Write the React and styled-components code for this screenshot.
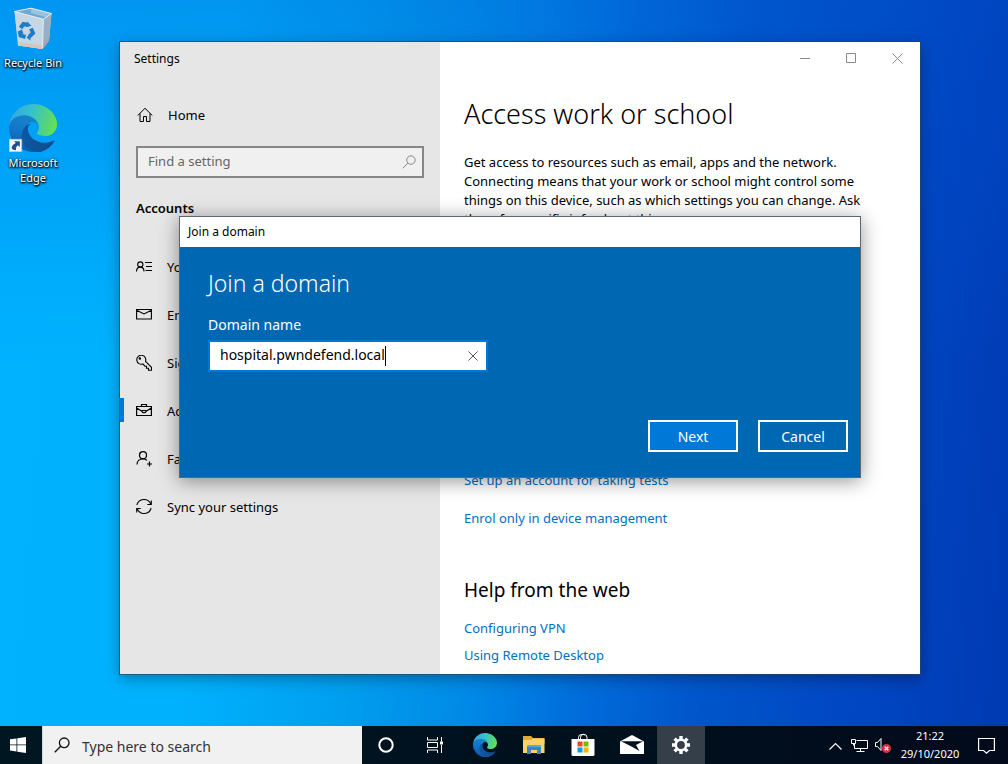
import { useState } from "react";
import styled, { createGlobalStyle } from "styled-components";

const GlobalStyle = createGlobalStyle`
  * {
    box-sizing: border-box;
  }
  body {
    margin: 0;
    font-family: "Noto Sans", "Open Sans", sans-serif;
    font-size: 13px;
    color: #000;
  }
  h1, h2, p, ul {
    margin: 0;
    padding: 0;
    font-weight: 400;
  }
  ul {
    list-style: none;
  }
  button, input {
    font-family: inherit;
    border: none;
    padding: 0;
    background: none;
    color: inherit;
    outline: none;
  }
  svg {
    display: block;
    flex-shrink: 0;
  }
`;

const Screen = styled.div`
  height: 100vh;
  display: flex;
  flex-direction: column;
  overflow: hidden;
`;

const Desktop = styled.main`
  position: relative;
  flex: 1;
  min-height: 0;
  background:
    linear-gradient(180deg, rgba(0, 86, 210, 0.3), rgba(0, 86, 210, 0) 50%),
    linear-gradient(
      95deg,
      #00b2ff 0%,
      #00b2fe 22%,
      #009eee 38%,
      #0088e6 50%,
      #006cda 60%,
      #0055ca 71%,
      #0046c2 86%,
      #003ab2 100%
    );
`;

const Shortcuts = styled.div`
  width: 66px;
  display: flex;
  flex-direction: column;
`;

const Shortcut = styled.button`
  min-height: 100px;
  padding-top: 4px;
  display: flex;
  flex-direction: column;
  align-items: center;
  justify-content: flex-start;
  gap: 3px;
  color: #fff;
  font-size: 11px;
  line-height: 15px;
  text-shadow: 0 1px 2px #000, 1px 1px 2px #000, 0 0 3px rgba(0, 0, 0, 0.6);
`;

const SettingsWindow = styled.section`
  position: absolute;
  top: 42px;
  left: 120px;
  right: 88px;
  bottom: 52px;
  display: flex;
  background: #fff;
  box-shadow: 0 0 0 1px rgba(40, 70, 100, 0.7), 0 4px 14px rgba(0, 0, 0, 0.35);
`;

const Sidebar = styled.nav`
  width: 320px;
  flex-shrink: 0;
  background: #e6e6e6;
`;

const WindowTitle = styled.div`
  height: 34px;
  padding-left: 14px;
  font-size: 12px;
  line-height: 34px;
`;

const HomeButton = styled.button`
  width: 100%;
  height: 40px;
  margin-top: 19px;
  padding-left: 17px;
  display: flex;
  align-items: center;
  gap: 15px;
  font-size: 13px;
`;

const SearchBox = styled.label`
  height: 32px;
  margin: 11px 16px 0;
  padding: 0 6px 0 10px;
  display: flex;
  align-items: center;
  border: 2px solid #868686;
  background: #f0f0f0;
  color: #777;

  input {
    flex: 1;
    min-width: 0;
    height: 28px;
    padding-bottom: 2px;
    font-size: 13px;
    color: #000;
  }
  input::placeholder {
    color: #666;
    opacity: 1;
  }
`;

const SectionTitle = styled.h2`
  margin: 20px 16px 25px;
  font-size: 13px;
  line-height: 20px;
  font-weight: 600;
`;

const NavItem = styled.button`
  position: relative;
  width: 100%;
  height: 48px;
  padding-left: 16px;
  display: flex;
  align-items: center;
  gap: 15px;
  font-size: 13px;
  white-space: nowrap;

  &::before {
    content: "";
    position: absolute;
    left: 0;
    top: 11px;
    width: 4px;
    height: 24px;
    background: ${(props) => (props.$active ? "#0078d7" : "transparent")};
  }
`;

const Content = styled.div`
  flex: 1;
  min-width: 0;
  display: flex;
  flex-direction: column;
`;

const CaptionButtons = styled.div`
  display: flex;
  justify-content: flex-end;
  color: #8a8a8a;
`;

const CaptionButton = styled.button`
  width: 46px;
  height: 32px;
  display: grid;
  place-items: center;
`;

const Article = styled.div`
  flex: 1;
  display: flex;
  flex-direction: column;
  padding: 22px 40px 9px 24px;

  h1 {
    font-size: 27px;
    line-height: 36px;
    font-weight: 300;
  }
  p {
    max-width: 416px;
    margin-top: 21px;
    line-height: 19px;
  }
  h2 {
    margin: 48px 0 14px;
    font-size: 19px;
    line-height: 28px;
  }
`;

const LinkList = styled.div`
  display: flex;
  flex-direction: column;
  align-items: flex-start;
  gap: ${(props) => props.$gap}px;
  margin-top: ${(props) => (props.$push ? "auto" : "0")};

  a {
    color: #006fc4;
    line-height: 20px;
    text-decoration: none;
  }
`;

const Dialog = styled.section`
  position: absolute;
  top: 174px;
  left: 59px;
  right: 59px;
  border: 1px solid #5c6670;
  background: #0067b3;
  color: #fff;
  box-shadow: 0 3px 18px rgba(0, 0, 0, 0.42);
`;

const DialogTitle = styled.div`
  height: 30px;
  padding-left: 8px;
  background: #fff;
  color: #000;
  font-size: 12px;
  line-height: 30px;
`;

const DialogForm = styled.form`
  padding: 20px 12px 25px 28px;

  h1 {
    font-size: 23px;
    line-height: 32px;
    font-weight: 300;
  }
  > label {
    display: block;
    margin: 16px 0 5px;
    font-size: 14px;
    line-height: 20px;
  }
`;

const DomainField = styled.div`
  max-width: 280px;
  height: 32px;
  padding-left: 10px;
  display: flex;
  align-items: center;
  border: 2px solid #0078d7;
  background: #fff;
  color: #000;

  input {
    field-sizing: content;
    min-width: 0;
    height: 28px;
    padding-bottom: 3px;
    font-size: 14px;
    caret-color: transparent;
  }
  button {
    width: 26px;
    height: 28px;
    margin-left: auto;
    display: grid;
    place-items: center;
    color: #444;
  }
`;

const Caret = styled.span`
  width: 1px;
  height: 20px;
  background: #000;
`;

const DialogActions = styled.div`
  margin-top: 48px;
  display: flex;
  justify-content: flex-end;
  gap: 20px;
`;

const DialogButton = styled.button`
  width: 90px;
  height: 32px;
  border: 2px solid #fff;
  background: ${(props) => (props.$primary ? "#0078d7" : "transparent")};
  font-size: 14px;
`;

const Taskbar = styled.footer`
  height: 38px;
  flex-shrink: 0;
  display: flex;
  background: linear-gradient(90deg, #001722, #00101d 60%, #020a1b);
  color: #fff;
`;

const TaskButton = styled.button`
  width: ${(props) => props.$width || 49}px;
  display: grid;
  place-items: center;
  background: ${(props) => (props.$active ? "#343f49" : "transparent")};
`;

const StartButton = styled(TaskButton)`
  padding-right: 6px;
`;

const TaskSearch = styled.label`
  width: 320px;
  padding-left: 11px;
  display: flex;
  align-items: center;
  gap: 12px;
  border-left: 1px solid #d6d9da;
  background: #f1f1f1;
  color: #111;

  input {
    flex: 1;
    min-width: 0;
    height: 38px;
    padding-top: 2px;
    font-size: 14px;
  }
  input::placeholder {
    color: #333;
    opacity: 1;
  }
`;

const PinnedApps = styled.div`
  display: flex;
  padding-right: 1px;
  padding-left: 2px;
`;

const Tray = styled.div`
  margin-left: auto;
  display: flex;
  align-items: center;
`;

const TrayButton = styled.button`
  width: ${(props) => props.$width}px;
  height: 38px;
  display: grid;
  place-items: center;
`;

const Clock = styled.button`
  width: 70px;
  font-size: 11px;
  line-height: 18px;
  text-align: center;
`;

const Line = ({ size = 16, box = 16, width = 1, children }) => (
  <svg
    width={size}
    height={size}
    viewBox={`0 0 ${box} ${box}`}
    fill="none"
    stroke="currentColor"
    strokeWidth={width}
    aria-hidden="true"
  >
    {children}
  </svg>
);

const HomeIcon = () => (
  <Line>
    <path d="M.7 8.500 8 1.300l7.300 7.200M3 6.500v8h3.500v-5h3v5H13v-8" />
  </Line>
);

const SearchIcon = ({ size = 14, width = 1 }) => (
  <Line size={size} width={width}>
    <circle cx="10.200" cy="5.800" r="4.800" />
    <path d="M6.700 9.300.8 15.200" />
  </Line>
);

const YourInfoIcon = () => (
  <Line width={1.1}>
    <circle cx="4.300" cy="5.500" r="2.600" />
    <path d="M.5 12.500c0-2.700 1.500-4.400 3.800-4.400S8 9.800 8 12.500M9 3.500h7M10 7.500h6M9.500 11.500H16" />
  </Line>
);

const MailIcon = () => (
  <Line width={1.1}>
    <path d="M.6 2.500h14.800v9.500H.6zM.6 3.200 8 7l7.400-3.800" />
  </Line>
);

const KeyIcon = () => (
  <Line width={1.1}>
    <path d="M6.900 9A4.500 4.500 0 1 1 9.500 6.400l6 6v2.800h-3v-2h-2v-2H8.900z" />
    <circle cx="3.900" cy="3.600" r=".7" />
  </Line>
);

const BriefcaseIcon = () => (
  <Line width={1.2}>
    <path d="M.6 3.500h14.800v9H.6zM5.500 3.500v-2h5v2M.6 5l5.400 3.200M15.400 5 10 8.200" />
    <path d="M6 7.500h4v.7a1.500 1.500 0 0 1-1.500 1.500h-1A1.500 1.500 0 0 1 6 8.200z" />
  </Line>
);

const FamilyIcon = () => (
  <Line width={1.2}>
    <circle cx="7" cy="4.200" r="3.500" />
    <path d="M1 13.500C1 10 3.500 7.800 7 7.800c1.800 0 3 .5 4 1.500M13.500 10.500v5M11 13h5" />
  </Line>
);

const SyncIcon = () => (
  <Line width={1.1}>
    <path d="M.9 6A7.300 7.300 0 0 1 14.700 5M15.100 9A7.300 7.300 0 0 1 1.300 10M15.300 1.500v4h-4M.7 13.500v-4h4" />
  </Line>
);

const CloseIcon = ({ size = 11 }) => (
  <Line size={size} box={11}>
    <path d="m.5.5 10 10M10.500.5l-10 10" />
  </Line>
);

const EdgeIcon = ({ size, id }) => (
  <svg width={size} height={size} viewBox="0 0 256 256" aria-hidden="true">
    <defs>
      <linearGradient id={`${id}a`} x1="60" y1="170" x2="240" y2="170" gradientUnits="userSpaceOnUse">
        <stop offset="0" stopColor="#0c59a4" />
        <stop offset="1" stopColor="#114a8b" />
      </linearGradient>
      <linearGradient id={`${id}b`} x1="110" y1="70" x2="45" y2="230" gradientUnits="userSpaceOnUse">
        <stop offset="0" stopColor="#1583cc" />
        <stop offset=".5" stopColor="#1277ca" />
        <stop offset="1" stopColor="#0b5cb0" />
      </linearGradient>
      <linearGradient id={`${id}c`} x1="10" y1="60" x2="250" y2="120" gradientUnits="userSpaceOnUse">
        <stop offset="0" stopColor="#35a8e0" />
        <stop offset=".4" stopColor="#36c0cf" />
        <stop offset=".75" stopColor="#50d284" />
        <stop offset="1" stopColor="#66e24f" />
      </linearGradient>
    </defs>
    <path
      fill={`url(#${id}a)`}
      d="M235.680 195.460a93.730 93.730 0 0 1-10.540 4.710 101.870 101.870 0 0 1-35.900 6.460c-47.320 0-88.540-32.550-88.540-74.320a31.480 31.480 0 0 1 16.430-27.310c-42.800 1.800-53.800 46.400-53.800 72.530 0 73.880 68.090 81.370 82.760 81.370 7.910 0 19.840-2.300 27-4.560l1.310-.44a128.340 128.340 0 0 0 66.600-52.800 4 4 0 0 0-5.320-5.640z"
    />
    <path
      fill={`url(#${id}b)`}
      d="M105.730 241.420a79.200 79.200 0 0 1-22.740-21.340 80.720 80.720 0 0 1 29.530-120c3.120-1.470 8.450-4.130 15.540-4a32.350 32.350 0 0 1 25.690 13 31.880 31.880 0 0 1 6.360 18.660c0-.21 24.460-79.600-80-79.600-43.900 0-80 41.660-80 78.210a130.150 130.150 0 0 0 12.110 56 128 128 0 0 0 156.380 67.110 75.550 75.550 0 0 1-62.780-8z"
    />
    <path
      fill={`url(#${id}c)`}
      d="M152.330 148.860c-.81 1.050-3.300 2.500-3.300 5.660 0 2.610 1.700 5.120 4.720 7.230 14.380 10 41.490 8.680 41.560 8.680a59.560 59.560 0 0 0 30.270-8.350 61.380 61.380 0 0 0 30.430-52.880c.26-22.410-8-37.310-11.340-43.910C223.460 23.840 177.720 0 128 0A128 128 0 0 0 0 126.200c.48-36.540 36.800-66.050 80-66.050 3.500 0 23.460.34 42 10.070 16.340 8.580 24.900 18.940 30.850 29.210 6.180 10.670 7.280 24.150 7.280 29.520 0 5.370-2.740 13.330-7.800 19.910z"
    />
  </svg>
);

const EdgeShortcutIcon = () => (
  <svg width="48" height="48" viewBox="0 0 48 48" aria-hidden="true">
    <EdgeIcon size={48} id="desk" />
    <path fill="#f7f9fb" stroke="#b9c4cf" strokeWidth=".6" d="M.3 35.300h12.400v12.400H.3z" />
    <path
      fill="#1c4f8c"
      d="M5 37.200h5.800V43L8.900 41.200c-1.600 1.200-2.200 2.700-1.900 5-2.600-.3-4.200-1-4.400-2.200.3-2 1.800-3.800 4.200-4.900z"
    />
  </svg>
);

const BinIcon = () => (
  <svg width="48" height="48" viewBox="0 0 48 48" aria-hidden="true">
    <path fill="#b9d3e6" d="M5.500 7.500 22 4.200l20.500 5.300L40 36.500 33.500 45 9.500 41.500z" />
    <path fill="#6fa9d4" d="M5.500 7.500 22 4.200l20.500 5.300-8.200 5.800z" />
    <path fill="#98c2e0" d="m22 4.200 20.500 5.300-5.500 3.800L22 9z" />
    <path fill="#c6d6e3" d="m5.500 7.500 28.800 7.800-.8 29.700L9 41.500z" />
    <path fill="#97b0c6" d="m34.300 15.300 8.200-5.800L40 36.500 33.500 45z" />
    <path fill="#d9c4b8" d="m8.800 38 24.800 3.500-.1 3.500L9 41.500z" />
    <path fill="#b79e95" d="m33.600 41.500 6.700-7.500-.3 2.500-6.500 8.500z" />
    <path fill="none" stroke="#e4eef5" d="M5.500 7.500 22 4.200l20.500 5.300-8.200 5.800zM34.300 15.300l-.8 29" />
    <g fill="none" stroke="#1c7ccc" strokeWidth="4">
      <path d="m11.500 24 3-4 4.500 1M22 24.500l2 4.500-3.600 3.500M16.500 33l-5-1.500-.7-3.500" />
    </g>
    <path fill="#1c7ccc" d="m18 17.500 4.500 4.200-5.500 1.500zM21.500 29.500l-4 4 4 3zM8 28l5-2.500 1.500 4.500z" />
  </svg>
);

const StartIcon = () => (
  <svg width="16" height="16" viewBox="0 0 16 16" fill="#fff" aria-hidden="true">
    <path d="M0 2.300 6.500 1.400v6.100H0zM7.300 1.300 16 0v7.500H7.300zM0 8.300h6.500v6.200L0 13.600zM7.300 8.300H16V16l-8.700-1.300z" />
  </svg>
);

const TaskViewIcon = () => (
  <Line size={17} box={17}>
    <path d="M1.500 0v3h10V0M1.500 16v-3h10v3M1.500 5.500h10v5h-10zM15.500 0v4.500M15.500 8v8" />
    <path fill="currentColor" stroke="none" d="M14 4.500h3v3h-3z" />
  </Line>
);

const ExplorerIcon = () => (
  <svg width="22" height="20" viewBox="0 0 22 20" aria-hidden="true">
    <path fill="#e5a82b" d="M0 1.500Q0 1 .5 1H8l2 2h11q.5 0 .5.500V9H0z" />
    <path fill="#fbd36b" d="M0 5h8.500L10 3.500h11.500V18H0z" />
    <path fill="#3b86c4" d="M4 19v-7.500Q4 10 5.500 10h11q1.500 0 1.500 1.500V19h-4v-4H8v4z" />
    <path fill="#5ea5dc" d="M4 12v-.5Q4 10 5.500 10h11q1.500 0 1.500 1.500v.5z" />
  </svg>
);

const StoreIcon = () => (
  <svg width="24" height="24" viewBox="0 0 24 24" aria-hidden="true">
    <path fill="none" stroke="#fff" d="M7.500 7V4.500a3 3 0 0 1 3-3h1.500M9.500 7V4.500a3.200 3.200 0 0 1 6.500 0V7M12 1.500a3 3 0 0 1 2 .6" />
    <path fill="#fff" d="M.5 6h23v15.500q0 1.500-1.500 1.500H2Q.5 23 .5 21.500z" />
    <path fill="#e64b20" d="M6.500 8.500h5v5h-5z" />
    <path fill="#7db700" d="M12.500 8.500h5v5h-5z" />
    <path fill="#009fe8" d="M6.500 14.500h5v5h-5z" />
    <path fill="#fab400" d="M12.500 14.500h5v5h-5z" />
  </svg>
);

const MailAppIcon = () => (
  <svg width="24" height="20" viewBox="0 0 24 20" aria-hidden="true">
    <path fill="#fff" d="M0 6.500 12 0l12 6.500V19H0z" />
    <path fill="#00121f" d="M1 6.200h22l-7 3.800 3.500 6L11.500 11.500z" />
  </svg>
);

const GearIcon = () => (
  <svg width="18" height="18" viewBox="0 0 18 18" fill="none" stroke="#fff" aria-hidden="true">
    <circle cx="9" cy="9" r="5.200" strokeWidth="2.600" />
    <path
      strokeWidth="3.400"
      d="M9 0v3.500M9 14.500V18M0 9h3.500M14.500 9H18M2.600 2.600l2.500 2.500M12.900 12.900l2.500 2.500M2.600 15.400l2.500-2.500M12.900 5.100l2.500-2.500"
    />
  </svg>
);

const NetworkIcon = () => (
  <Line size={17} box={17}>
    <path d="M5.500 3.500h11v8H3.500V6.500M.5 2.500h4v4h-4zM2.500 6.500v2M9.500 11.500v3M5.500 14.500h8" />
  </Line>
);

const VolumeIcon = () => (
  <svg width="18" height="18" viewBox="0 0 18 18" fill="none" stroke="#fff" aria-hidden="true">
    <path d="M1.500 6.500h2l3.500-4v12l-3.500-4h-2z" />
    <circle cx="12.500" cy="12.500" r="4.500" fill="#d8303b" stroke="none" />
    <path strokeWidth="1.300" d="m10.700 10.700 3.600 3.600M14.300 10.700l-3.600 3.600" />
  </svg>
);

const navItems = [
  { label: "Your info", icon: <YourInfoIcon /> },
  { label: "Email & accounts", icon: <MailIcon /> },
  { label: "Sign-in options", icon: <KeyIcon /> },
  { label: "Access work or school", icon: <BriefcaseIcon />, active: true },
  { label: "Family & other users", icon: <FamilyIcon /> },
  { label: "Sync your settings", icon: <SyncIcon /> },
];

function JoinDomainDialog() {
  const [domain, setDomain] = useState("hospital.pwndefend.local");

  return (
    <Dialog role="dialog" aria-label="Join a domain">
      <DialogTitle>Join a domain</DialogTitle>
      <DialogForm onSubmit={(e) => e.preventDefault()}>
        <h1>Join a domain</h1>
        <label htmlFor="domain">Domain name</label>
        <DomainField>
          <input
            id="domain"
            type="text"
            spellCheck="false"
            value={domain}
            onChange={(e) => setDomain(e.target.value)}
          />
          <Caret />
          <button type="button" aria-label="Clear" onClick={() => setDomain("")}>
            <CloseIcon size={10} />
          </button>
        </DomainField>
        <DialogActions>
          <DialogButton type="submit" $primary>
            Next
          </DialogButton>
          <DialogButton type="button">Cancel</DialogButton>
        </DialogActions>
      </DialogForm>
    </Dialog>
  );
}

function App() {
  return (
    <Screen>
      <GlobalStyle />
      <Desktop>
        <Shortcuts>
          <Shortcut>
            <BinIcon />
            Recycle Bin
          </Shortcut>
          <Shortcut>
            <EdgeShortcutIcon />
            Microsoft Edge
          </Shortcut>
        </Shortcuts>

        <SettingsWindow>
          <Sidebar>
            <WindowTitle>Settings</WindowTitle>
            <HomeButton>
              <HomeIcon />
              Home
            </HomeButton>
            <SearchBox>
              <input type="text" placeholder="Find a setting" aria-label="Find a setting" />
              <SearchIcon />
            </SearchBox>
            <SectionTitle>Accounts</SectionTitle>
            <ul>
              {navItems.map((item) => (
                <li key={item.label}>
                  <NavItem $active={item.active}>
                    {item.icon}
                    {item.label}
                  </NavItem>
                </li>
              ))}
            </ul>
          </Sidebar>

          <Content>
            <CaptionButtons>
              <CaptionButton aria-label="Minimise">
                <Line size={11} box={11}>
                  <path d="M0 5.500h10" />
                </Line>
              </CaptionButton>
              <CaptionButton aria-label="Maximise">
                <Line size={11} box={11}>
                  <path d="M.5.5h9v9h-9z" />
                </Line>
              </CaptionButton>
              <CaptionButton aria-label="Close">
                <CloseIcon />
              </CaptionButton>
            </CaptionButtons>
            <Article>
              <h1>Access work or school</h1>
              <p>
                Get access to resources such as email, apps and the network.
                Connecting means that your work or school might control some
                things on this device, such as which settings you can change. Ask
                them for specific info about this.
              </p>
              <LinkList $gap={18} $push>
                <a href="#tests">Set up an account for taking tests</a>
                <a href="#enrol">Enrol only in device management</a>
              </LinkList>
              <h2>Help from the web</h2>
              <LinkList $gap={7}>
                <a href="#vpn">Configuring VPN</a>
                <a href="#remote">Using Remote Desktop</a>
              </LinkList>
            </Article>
          </Content>

          <JoinDomainDialog />
        </SettingsWindow>
      </Desktop>

      <Taskbar>
        <StartButton $width={42} aria-label="Start">
          <StartIcon />
        </StartButton>
        <TaskSearch>
          <SearchIcon size={16} width={1.3} />
          <input type="text" placeholder="Type here to search" aria-label="Type here to search" />
        </TaskSearch>
        <TaskButton $width={48} aria-label="Cortana">
          <Line size={16} width={2}>
            <circle cx="8" cy="8" r="6.700" />
          </Line>
        </TaskButton>
        <TaskButton $width={48} aria-label="Task View">
          <TaskViewIcon />
        </TaskButton>
        <PinnedApps>
          <TaskButton aria-label="Microsoft Edge">
            <EdgeIcon size={24} id="task" />
          </TaskButton>
          <TaskButton aria-label="File Explorer">
            <ExplorerIcon />
          </TaskButton>
          <TaskButton aria-label="Microsoft Store">
            <StoreIcon />
          </TaskButton>
          <TaskButton aria-label="Mail">
            <MailAppIcon />
          </TaskButton>
        </PinnedApps>
        <TaskButton $width={48} $active aria-label="Settings">
          <GearIcon />
        </TaskButton>
        <Tray>
          <TrayButton $width={24} aria-label="Show hidden icons">
            <Line size={13} box={13} width={1.2}>
              <path d="m.5 10.500 6-6 6 6" />
            </Line>
          </TrayButton>
          <TrayButton $width={24} aria-label="Network">
            <NetworkIcon />
          </TrayButton>
          <TrayButton $width={24} aria-label="Volume">
            <VolumeIcon />
          </TrayButton>
          <Clock>
            21:22
            <br />
            29/10/2020
          </Clock>
          <TrayButton $width={43} aria-label="Notifications">
            <Line size={17} box={17} width={1.2}>
              <path d="M.6 1.500h15.800v12h-5L8.500 16.200l-2.900-2.700h-5z" />
            </Line>
          </TrayButton>
        </Tray>
      </Taskbar>
    </Screen>
  );
}

export default App;
